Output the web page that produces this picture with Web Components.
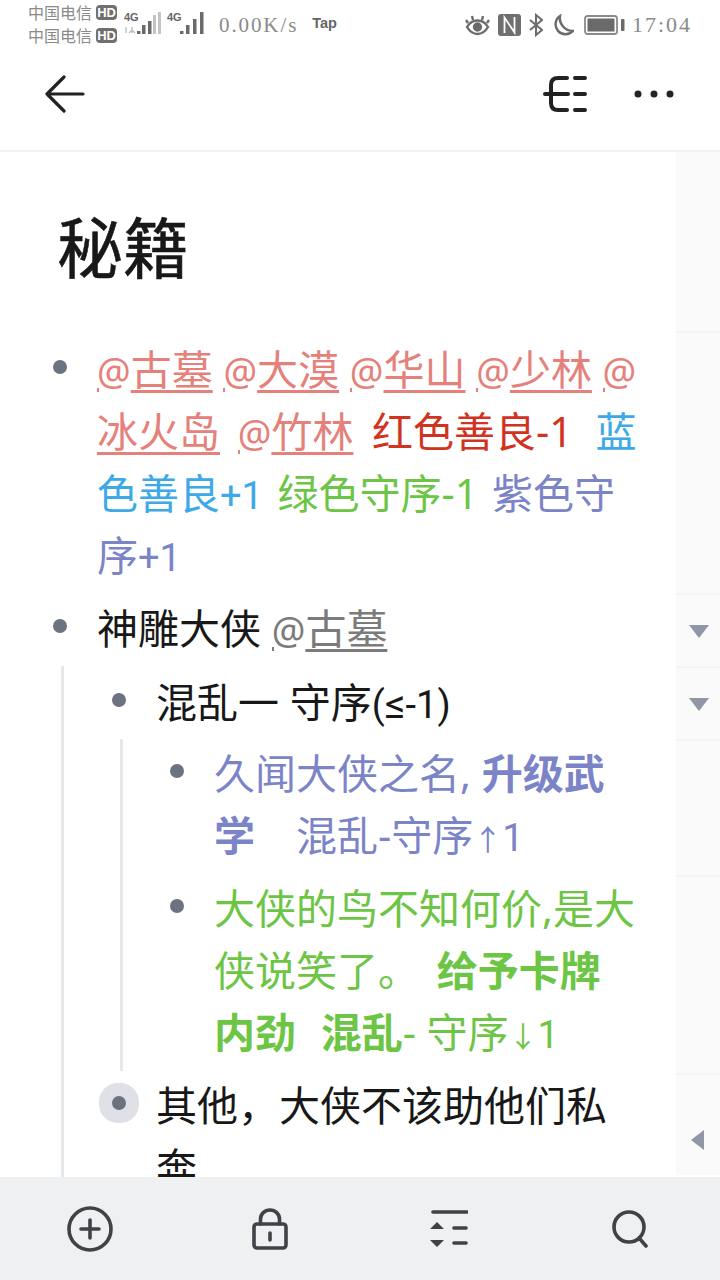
<!DOCTYPE html>
<html lang="zh">
<head>
<meta charset="utf-8">
<title>秘籍</title>
<style>
  html, body { margin: 0; padding: 0; background: #fff; }
  body { width: 720px; height: 1280px; overflow: hidden; font-family: "Noto Sans CJK SC", "Noto Sans", sans-serif; }
  .page { display: flex; flex-direction: column; height: 1280px; }
  .middle { flex: 1; min-height: 0; display: flex; overflow: hidden; }
  .sym { font-family: Roboto, sans-serif; font-size: 38px; line-height: 1; }
  .sym i { font-style: normal; font-size: 41px; line-height: 1; }
  .arrow { font-family: "Noto Sans CJK SC", sans-serif; font-size: 29px; line-height: 1; }
</style>
</head>
<body>
<div class="page">
  <status-bar></status-bar>
  <top-bar></top-bar>
  <div class="middle">
    <outline-doc heading="秘籍">
      <outline-item>
        <at-mention color="#e5817a">古墓</at-mention> <at-mention color="#e5817a">大漠</at-mention> <at-mention color="#e5817a">华山</at-mention> <at-mention color="#e5817a">少林</at-mention> <at-mention color="#e5817a">冰火岛</at-mention> <at-mention color="#e5817a" style="margin-left:7px">竹林</at-mention> <span style="color:#d0341f;margin-left:8px">红色善良-1</span> <span style="color:#3ea9e8;margin-left:12px">蓝色善良<span class="sym">+1</span></span> <span style="color:#6dc545;margin-left:4px">绿色守序-1</span> <span style="color:#7c84c8;margin-left:3px">紫色守序<span class="sym">+1</span></span>
      </outline-item>
      <outline-item>
        神雕大侠 <at-mention color="#7b7b7b">古墓</at-mention>
        <outline-item slot="sub" tight>
          混乱一 守序<span class="sym">(<i>≤</i>-1)</span>
          <outline-item slot="sub" style="color:#7c84c8">
            久闻大侠之名, <b>升级武学</b>　混乱-守序<span class="arrow">↑</span><span class="sym">1</span>
          </outline-item>
          <outline-item slot="sub" style="color:#6dc545">
            大侠的鸟不知何价,是大侠说笑了。 <b style="margin-left:7px">给予卡牌内劲</b> <b style="margin-left:14px">混乱</b>- 守序<span class="arrow">↓</span><span class="sym">1</span>
          </outline-item>
        </outline-item>
        <outline-item slot="sub" active>
          其他，大侠不该助他们私奔
        </outline-item>
      </outline-item>
    </outline-doc>
    <side-rail></side-rail>
  </div>
  <bottom-bar></bottom-bar>
</div>

<script>
class StatusBar extends HTMLElement {
  constructor() {
    super();
    this.attachShadow({ mode: 'open' });
  }
  connectedCallback() {
    this.shadowRoot.innerHTML = `
      <style>
        :host { display: flex; align-items: center; height: 50px; padding: 0 28px; box-sizing: border-box; color: #8a8a8a; flex: none; }
        .carriers { display: flex; flex-direction: column; gap: 3px; font: 16px/20px "Noto Sans CJK SC", sans-serif; width: 96px; margin-top: -3px; }
        .carriers div { display: flex; align-items: center; gap: 4px; }
        .hd { font: bold 13px/15px "Liberation Sans", sans-serif; background: #6f6f6f; color: #fff; border-radius: 4px; width: 21px; text-align: center; }
        .speed { font: 21px/26px "Liberation Serif", serif; letter-spacing: 1.9px; margin-left: 15px; }
        .tap { font: bold 14.500px/16px "Liberation Sans", sans-serif; color: #666; margin: -4px 0 0 14px; }
        .right { margin-left: auto; display: flex; align-items: center; gap: 8px; }
        .time { font: 22px/26px "Liberation Serif", serif; letter-spacing: 2px; margin-left: -1px; }
        svg { display: block; }
      </style>
      <div class="carriers">
        <div>中国电信<span class="hd">HD</span></div>
        <div>中国电信<span class="hd">HD</span></div>
      </div>
      <svg width="80" height="30" viewBox="0 0 80 30">
        <text x="0" y="11" font-family="Liberation Sans" font-weight="bold" font-size="11" fill="#666">4G</text>
        <path d="M2 17v6M8 17v6M5 23l3-3 3 3" fill="none" stroke="#c4c4c4" stroke-width="1.500"/>
        <g fill="#6a6a6a"><rect x="13" y="21" width="3.500" height="3"/><rect x="18" y="15" width="3.500" height="9"/><rect x="24" y="11" width="3.500" height="13"/></g>
        <g fill="#c4c4c4"><rect x="29" y="5" width="3" height="19"/><rect x="34" y="2" width="3" height="22"/></g>
        <text x="43" y="11" font-family="Liberation Sans" font-weight="bold" font-size="11" fill="#666">4G</text>
        <g fill="#6a6a6a"><rect x="56" y="21" width="3.500" height="3"/><rect x="62" y="15" width="3.500" height="9"/><rect x="69" y="9" width="3.500" height="15"/><rect x="76" y="2" width="3.500" height="22"/></g>
      </svg>
      <span class="speed">0.00K/s</span>
      <span class="tap">Tap</span>
      <div class="right">
        <svg width="25" height="22" viewBox="0 0 25 22" fill="none" stroke="#6b6b6b" stroke-width="2.400">
          <path d="M2 13c3-5 6.500-6.500 10.500-6.500S20 8 23 13c-3 5-6.500 7-10.500 7S5 18 2 13z"/>
          <circle cx="12.500" cy="13" r="3.500" fill="#6b6b6b"/>
          <path d="M3 9 1 6M8 6 7 2M17 6l1-4M22 9l2-3"/>
        </svg>
        <svg width="23" height="22" viewBox="0 0 23 22">
          <rect width="23" height="22" rx="3" fill="#6f6f6f"/>
          <path d="M6.500 19V3.500L16.500 18.500V3" fill="none" stroke="#fff" stroke-width="1.800"/>
        </svg>
        <svg width="14" height="24" viewBox="0 0 14 24" fill="none" stroke="#6b6b6b" stroke-width="2">
          <path d="M1 7l12 10-6 5V2l6 5L1 17"/>
        </svg>
        <svg width="23" height="23" viewBox="0 0 23 23" fill="none" stroke="#6b6b6b" stroke-width="2.400">
          <path d="M9 2A10 10 0 1 0 22 17 13 13 0 0 1 9 2z"/>
        </svg>
        <svg width="41" height="20" viewBox="0 0 41 20" style="margin-left:2px">
          <rect x="1" y="1" width="32" height="18" rx="2.500" fill="none" stroke="#8a8a8a" stroke-width="1.800"/>
          <rect x="3.500" y="3.500" width="27" height="13" fill="#6a6a6a"/>
          <rect x="37" y="4" width="3.500" height="12" rx="1" fill="#6a6a6a"/>
        </svg>
        <span class="time">17:04</span>
      </div>
    `;
  }
}

class TopBar extends HTMLElement {
  constructor() {
    super();
    this.attachShadow({ mode: 'open' });
  }
  connectedCallback() {
    this.shadowRoot.innerHTML = `
      <style>
        :host { display: flex; align-items: center; height: 103px; padding: 0 44px 11px 45px; box-sizing: border-box; border-bottom: 2px solid #f0f1f3; flex: none; margin-top: -1px; }
        .right { margin-left: auto; display: flex; align-items: center; gap: 47px; }
        svg { display: block; }
      </style>
      <svg width="40" height="38" viewBox="0 0 40 38" fill="none" stroke="#222" stroke-width="3.200" stroke-linecap="round" stroke-linejoin="round">
        <path d="M19 2 2 19l17 17M2 19h36"/>
      </svg>
      <div class="right">
        <svg width="44" height="38" viewBox="0 0 44 38" fill="none" stroke="#222" stroke-width="4" stroke-linecap="round">
          <path d="M24 3h-9c-5 0-7 3-7 7v18c0 4 2 7 7 7h9M2 19h23M32 3h10M32 19h10M32 35h10"/>
        </svg>
        <svg width="41" height="8" viewBox="0 0 41 8" fill="#222" style="margin-right:1px">
          <circle cx="4" cy="4" r="3.500"/><circle cx="20" cy="4" r="3.500"/><circle cx="36" cy="4" r="3.500"/>
        </svg>
      </div>
    `;
  }
}

class OutlineDoc extends HTMLElement {
  constructor() {
    super();
    this.attachShadow({ mode: 'open' });
  }
  connectedCallback() {
    this.shadowRoot.innerHTML = `
      <style>
        :host { display: block; flex: 1; min-width: 0; padding: 0 36px 0 0; font: 41px/62px "Noto Sans", "Noto Sans CJK SC", sans-serif; color: #181818; }
        h1 { margin: 0; padding: 43px 0 0 57px; height: 133px; box-sizing: border-box; font: 400 66px/98px "Noto Sans CJK SC", sans-serif; -webkit-text-stroke: 0.6px #181818; color: #181818; }
        .items { display: flex; flex-direction: column; gap: 11px; padding-top: 53px; padding-left: 97px; }
      </style>
      <h1>${this.getAttribute('heading')}</h1>
      <div class="items"><slot></slot></div>
    `;
  }
}

class OutlineItem extends HTMLElement {
  constructor() {
    super();
    this.attachShadow({ mode: 'open' });
  }
  connectedCallback() {
    this.shadowRoot.innerHTML = `
      <style>
        :host { display: block; position: relative; }
        .dot { position: absolute; left: -44px; top: 22px; width: 14px; height: 14px; border-radius: 50%; background: #6b7280; }
        :host([active]) .dot { box-shadow: 0 0 0 13px #dfe1e6; }
        .text { display: block; }
        .sub { display: flex; flex-direction: column; gap: 11px; margin: 7px 0 0 -36px; padding: 5px 0 0 92px; border-left: 3px solid #e6e7ea; }
        :host([tight]) .sub { margin: 6px 0 -8px -36px; padding: 3px 0 8px 91px; }
        .sub.empty { display: none; }
      </style>
      <span class="dot"></span>
      <div class="text"><slot></slot></div>
      <div class="sub"><slot name="sub"></slot></div>
    `;
    if (!this.querySelector(':scope > [slot="sub"]')) {
      this.shadowRoot.querySelector('.sub').classList.add('empty');
    }
  }
}

class AtMention extends HTMLElement {
  constructor() {
    super();
    this.attachShadow({ mode: 'open' });
  }
  connectedCallback() {
    const color = this.getAttribute('color');
    this.shadowRoot.innerHTML = `
      <style>
        :host { display: inline; color: ${color}; }
        .at { font-size: 37.500px; line-height: 1; }
        .at::before { content: ""; display: inline-block; width: 2px; height: 4px; background: currentColor; vertical-align: -7px; margin-right: -2px; }
        .name { text-decoration: underline; text-decoration-thickness: 3px; text-underline-offset: 5px; text-decoration-skip-ink: none; }
      </style>
      <span class="at">@</span><span class="name"><slot></slot></span>
    `;
  }
}

class SideRail extends HTMLElement {
  constructor() {
    super();
    this.attachShadow({ mode: 'open' });
  }
  connectedCallback() {
    const rows = [
      [181, ''], [262, ''], [73, 'down'], [73, 'down'], [136, ''], [198, ''], [100, 'left']
    ];
    this.shadowRoot.innerHTML = `
      <style>
        :host { display: flex; flex-direction: column; width: 44px; flex: none; }
        .row { background: #fafafa; border-bottom: 2px solid #f5f5f6; box-sizing: border-box; display: flex; justify-content: center; padding-top: 30px; flex: none; }
        .row:last-child { border-bottom: 0; padding-top: 0; align-items: center; }
        .down { width: 0; height: 0; border: 10px solid transparent; border-top: 13px solid #8f96a6; border-bottom: 0; margin-left: 1px; }
        .left { width: 0; height: 0; border: 10px solid transparent; border-right: 13px solid #8f96a6; border-left: 0; margin-left: -1px; margin-top: 30px; }
      </style>
      ${rows.map(r => `<div class="row" style="height:${r[0]}px">${r[1] ? `<span class="${r[1]}"></span>` : ''}</div>`).join('')}
    `;
  }
}

class BottomBar extends HTMLElement {
  constructor() {
    super();
    this.attachShadow({ mode: 'open' });
  }
  connectedCallback() {
    this.shadowRoot.innerHTML = `
      <style>
        :host { display: grid; grid-template-columns: repeat(4, 180px); justify-items: center; align-items: center; height: 103px; background: #eef0f2; flex: none; }
        svg { display: block; fill: none; stroke: #3f4348; stroke-width: 3.600; stroke-linecap: round; }
      </style>
      <svg width="46" height="46" viewBox="0 0 46 46">
        <circle cx="23" cy="23" r="21"/><path d="M23 14v18M14 23h18"/>
      </svg>
      <svg width="36" height="42" viewBox="0 0 36 42">
        <rect x="2" y="16" width="32" height="24" rx="3"/>
        <path d="M8.500 16V11a9.500 9 0 0 1 19 0v5M18 25v7"/>
      </svg>
      <svg width="38" height="38" viewBox="0 0 38 38" style="margin-left:-3px">
        <path d="M3 2h34M24 18h12M24 33h12"/>
        <path d="M7 12l7 7H0zM7 37l7-7H0z" fill="#3f4348" stroke="none"/>
      </svg>
      <svg width="36" height="38" viewBox="0 0 36 38">
        <circle cx="17" cy="17" r="15"/><path d="M27 28l7 8"/>
      </svg>
    `;
  }
}

customElements.define('status-bar', StatusBar);
customElements.define('top-bar', TopBar);
customElements.define('outline-doc', OutlineDoc);
customElements.define('outline-item', OutlineItem);
customElements.define('at-mention', AtMention);
customElements.define('side-rail', SideRail);
customElements.define('bottom-bar', BottomBar);
</script>
</body>
</html>
